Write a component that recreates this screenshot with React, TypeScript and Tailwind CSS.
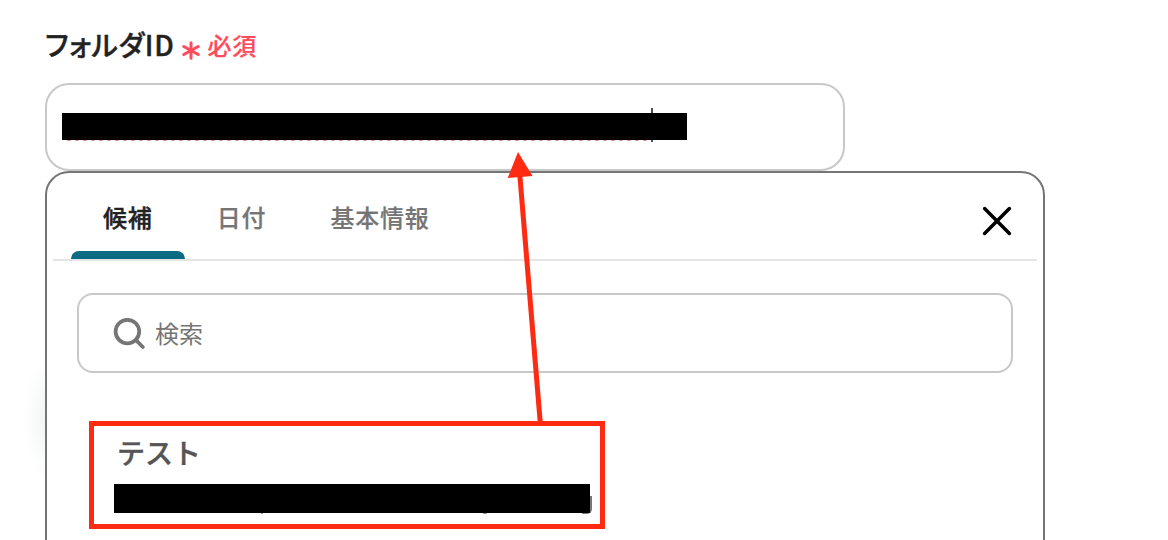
const TABS = [
    { id: 'suggest', name: '候補' },
    { id: 'date', name: '日付' },
    { id: 'basic', name: '基本情報' },
]

const FieldLabel = () => (
    <div className="flex h-10 items-center gap-[7px] whitespace-nowrap font-medium">
        <span className="pb-[2px] pr-px text-[28px] leading-[40px] tracking-[0.7px] text-[#222] [-webkit-text-stroke:0.4px] [font-feature-settings:'palt']">フォルダID</span>
        <svg className="mt-[10px] h-[19px] w-[18px] shrink-0" viewBox="0 0 18 19" stroke="#ff4b5c" strokeWidth="3" strokeLinecap="round">
            <path d="M9 1.7v15.6M1.8 5.5l14.4 8M16.2 5.5l-14.4 8" />
        </svg>
        <span className="text-2xl leading-[36px] tracking-[0.8px] text-[#ff4b5c] [-webkit-text-stroke:0.2px]">必須</span>
    </div>
)

// 入力欄 (値はマスク済み)
const FolderInput = () => (
    <div className="grid h-[88px] w-[800px] grid-cols-[625px] content-start rounded-3xl border-2 border-[#c8c8c8] bg-white pl-[15px] pt-[23px]">
        {/* カーソル */}
        <div className="col-start-1 row-start-1 ml-[589px] h-[34px] w-[2px] bg-[#4a4d52]" />
        <div className="col-start-1 row-start-1 pt-[5px]">
            <div className="h-[27px] bg-black" />
            {/* スペルチェックの点線 */}
            <div className="ml-[5px] h-px w-[584px] bg-[repeating-linear-gradient(90deg,#ff8080_0_3px,transparent_4px_8px)]" />
        </div>
    </div>
)

const TabBar = ({ current }: { current: string }) => (
    <div className="flex items-center justify-between border-b-2 border-[#e5e5e5] pl-[18px] pr-[25px]">
        <div className="flex">
            {TABS.map((tab) => (
                <button
                    key={tab.id}
                    className={`flex h-[86px] flex-col justify-between pt-[26px] text-2xl font-medium leading-[36px] tracking-[0.7px] ${tab.id === current ? "text-[#222] [-webkit-text-stroke:0.4px]" : "text-[#757575] [-webkit-text-stroke:0.2px]"}`}
                >
                    <span className="whitespace-nowrap pl-8 pr-[32.4px]">{tab.name}</span>
                    {tab.id === current && (
                        <span className="h-2 w-full rounded-t-lg bg-[#0b6b85]" />
                    )}
                </button>
            ))}
        </div>
        <button className="mt-[10px] h-[30px] w-[30px]">
            <svg viewBox="0 0 30 30" stroke="#000" strokeWidth="3.5" strokeLinecap="round">
                <path d="M2.6 2.6l24.8 24.8M27.4 2.6L2.6 27.4" />
            </svg>
        </button>
    </div>
)

const SearchBox = () => (
    <div className="flex h-20 items-center gap-[10px] rounded-2xl border-2 border-[#c8c8c8] pl-[34px]">
        <svg className="h-8 w-8 shrink-0" viewBox="0 0 32 32" fill="none" stroke="#757575" strokeWidth="3.8" strokeLinecap="round">
            <circle cx="14.4" cy="14.6" r="11.8" />
            <path d="M23.2 23.4l6.6 6.6" />
        </svg>
        <span className="text-2xl leading-[36px] text-[#757575]">検索</span>
    </div>
)

const ResultItem = () => (
    <div className="ml-3 flex h-[108px] w-[516px] flex-col gap-3 border-[5px] border-[#ff2a12] pl-5 pt-[6px]">
        <div className="pl-[3px] text-[28px] font-medium leading-[40px] text-[#555] [-webkit-text-stroke:0.4px]">テスト</div>
        <div className="relative h-[29px] w-[476px] bg-black">
            {/* マスクからはみ出した文字 */}
            <span className="absolute -right-[2px] top-3 h-[18px] w-[10px] rounded-br-[5px] border-b-2 border-r-2 border-[#777]" />
            <span className="absolute left-[369px] top-full h-px w-1 bg-[#999]" />
            <span className="absolute left-[147px] top-full h-px w-[2px] bg-[#999]" />
            <span className="absolute inset-0 bg-black" />
        </div>
    </div>
)

// 候補から入力欄への矢印
const Arrow = () => (
    <svg className="pointer-events-none absolute left-[500px] top-[145px] h-[280px] w-[50px]" viewBox="500 145 50 280">
        <path d="M519.8 175L540.2 422" stroke="#ff2a12" strokeWidth="5" />
        <path d="M518 152l14.5 24-24.8 2z" fill="#ff2a12" />
    </svg>
)

export default function App() {
    return (
        <div className="relative flex h-[540px] w-[1168px] flex-col overflow-hidden bg-[radial-gradient(ellipse_30px_65px_at_53px_418px,#eaf0ee,#f7f9f8_50%,#ffffff)] pl-[45px] pt-[25px] font-['Noto_Sans_CJK_JP','Noto_Sans',sans-serif]">
            <div className="flex flex-col gap-[18px]">
                <FieldLabel />
                <FolderInput />
            </div>
            <div className="h-[420px] w-[1000px] shrink-0 rounded-t-3xl border-2 border-[#757575] bg-white px-[6px]">
                <TabBar current="suggest" />
                <div className="flex flex-col gap-12 px-6 pt-8">
                    <SearchBox />
                    <ResultItem />
                </div>
            </div>
            <Arrow />
        </div>
    )
}
